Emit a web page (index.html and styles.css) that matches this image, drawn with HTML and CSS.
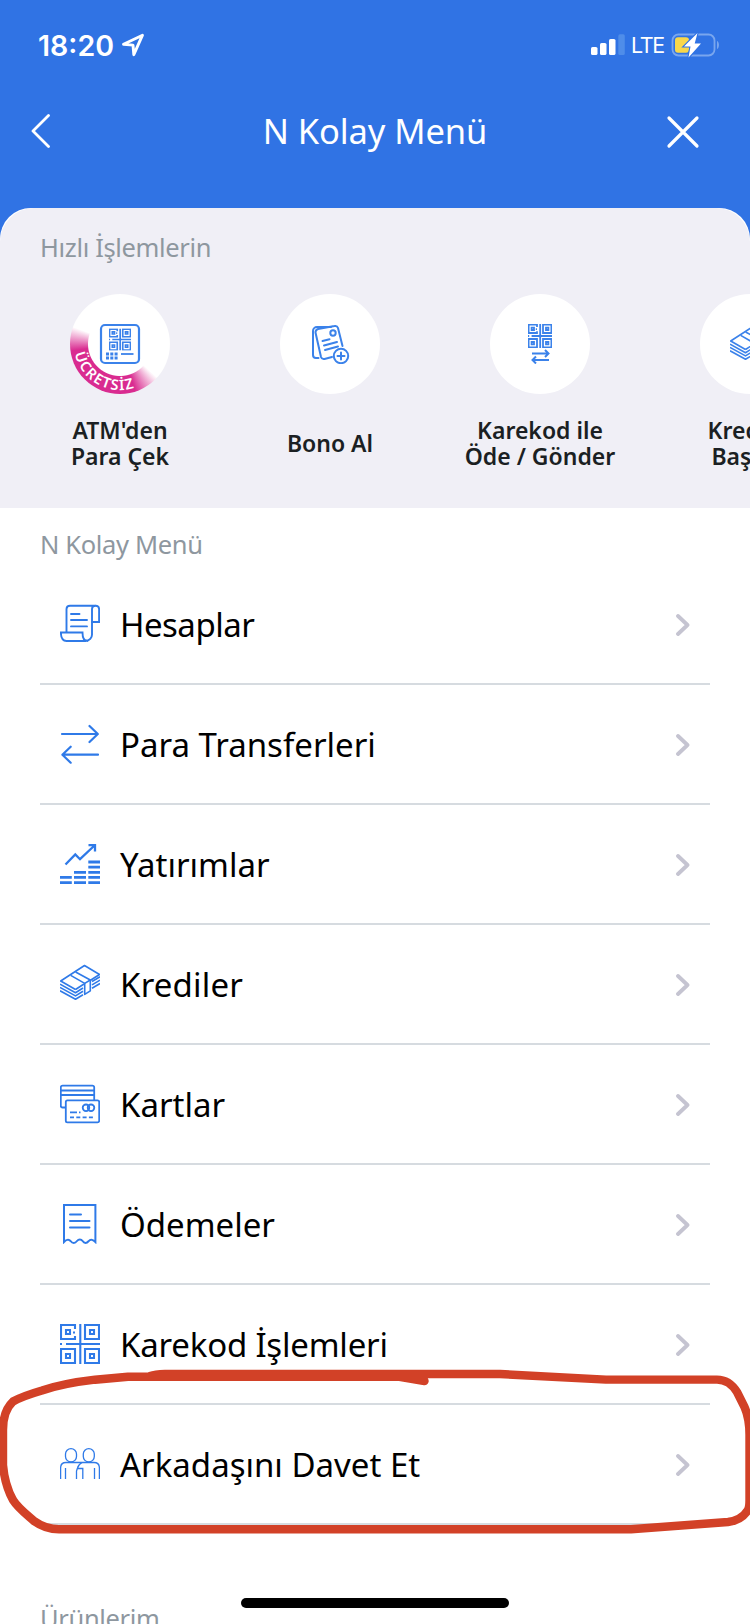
FILE: index.html
```html
<!DOCTYPE html>
<html lang="tr">
<head>
    <meta charset="UTF-8">
    <meta name="viewport" content="width=device-width, initial-scale=1.0">
    <title>N Kolay Menü</title>
    <link rel="stylesheet" href="styles.css">
</head>
<body>
    <!-- Shared icons -->
    <svg class="sprite" width="0" height="0">
        <symbol id="chevron" viewBox="0 0 14 22">
            <path d="M2 2l9.500 9-9.500 9" fill="none" stroke="#c5c4d1" stroke-width="3.800" stroke-linecap="round" stroke-linejoin="round"/>
        </symbol>
        <symbol id="qr" viewBox="0 0 40 40">
            <path d="M15 5V1H1v14h14v-3M25 1h14v14H25zM1 25h14v14H1zM25 25h14v14H25zM6 6h4v4H6zM30 6h4v4h-4zM6 30h4v4H6zM30 30h4v4h-4zM20.300 0v40M6 20h34M0 20h2M13 8.500h2" fill="none" stroke="currentColor"/>
        </symbol>
        <symbol id="money" viewBox="0 0 40 40">
            <g fill="none" stroke="currentColor" stroke-width="1.600" stroke-linejoin="round">
                <path d="M15.500 25.500L.700 17 24.500 1.500l15 9-9 5.700M15.500 25.500l8.500-5.500"/>
                <path d="M10.700 11.400l14 8v11l5.600-3.600V16L15.600 8"/>
                <path d="M24.700 19.400l5.600-3.400"/>
                <path d="M0 20.200l15.500 8.500 7.500-4.700M0 23.400l15.500 8.500 7.500-4.700M0 26.800l15.500 8.500 7.500-4.500"/>
                <path d="M32 17.500l8-4.800M32 20.900l8-4.800M32 24.300l8-4.800"/>
            </g>
        </symbol>
    </svg>

    <div class="phone">
        <header class="header">
            <div class="status-bar">
                <div class="status-left">
                    <span class="time">18:20</span>
                    <svg class="location" width="24" height="24" viewBox="0 0 24 24">
                        <path d="M21.500 2.200L2.500 11.300l9.500.800.800 9.600z" fill="none" stroke="#fff" stroke-width="2.900" stroke-linejoin="round"/>
                    </svg>
                </div>
                <div class="status-right">
                    <svg width="35" height="22" viewBox="0 0 35 22" fill="#fff">
                        <rect x="0" y="13" width="6.500" height="8" rx="1.600"/>
                        <rect x="9" y="9" width="6.500" height="12" rx="1.600"/>
                        <rect x="18" y="5" width="6.500" height="16" rx="1.600"/>
                        <rect x="27.300" y="0.300" width="6.500" height="20.700" rx="1.600" fill="#4f8de9"/>
                    </svg>
                    <span class="network">LTE</span>
                    <svg width="50" height="26" viewBox="0 0 50 26">
                        <rect x="1.500" y="2.500" width="42" height="21" rx="6" fill="none" stroke="#79a6ee" stroke-width="1.800"/>
                        <path d="M46 9c2.600.800 2.600 7.200 0 8z" fill="#79a6ee"/>
                        <rect x="4" y="5.200" width="14" height="15.600" rx="3" fill="#f8d74a"/>
                        <path d="M26.500 1L13 14.500h6.500L17.500 25.500 30 11.500h-6.300z" fill="#fff" stroke="#3073e4" stroke-width="2.200" paint-order="stroke"/>
                    </svg>
                </div>
            </div>
            <nav class="nav-bar">
                <svg width="36" height="36" viewBox="0 0 36 36">
                    <path d="M17.500 1.500L2 17 17.500 32.500" fill="none" stroke="#fff" stroke-width="2.800" stroke-linecap="round" stroke-linejoin="round"/>
                </svg>
                <h1>N Kolay Menü</h1>
                <svg width="36" height="36" viewBox="0 0 36 36">
                    <path d="M4 4l28 28M32 4l-28 28" stroke="#fff" stroke-width="3.200" stroke-linecap="round"/>
                </svg>
            </nav>
        </header>

        <main class="sheet">
            <section class="quick">
                <h2 class="quick-title">Hızlı İşlemlerin</h2>
                <div class="quick-list">
                    <a class="quick-item">
                        <span class="circle free">
                            <svg width="100" height="100" viewBox="0 0 100 100">
                                <defs>
                                    <path id="arc" d="M4.900 59.500A46 46 0 0 0 76 88"/>
                                </defs>
                                <text class="free-text"><textPath href="#arc" textLength="77">ÜCRETSİZ</textPath></text>
                                <rect x="31" y="31" width="38" height="38" rx="4" fill="none" stroke="#3b82ea" stroke-width="2.200"/>
                                <use href="#qr" x="39" y="34.500" width="22" height="22" stroke-width="3"/>
                                <path d="M36 60h12M36 64h12" stroke="#3b82ea" stroke-width="3" stroke-dasharray="3 1.300"/>
                                <path d="M51 60h12.500" stroke="#3b82ea" stroke-width="1.800"/>
                            </svg>
                        </span>
                        <span class="quick-label">ATM'den<br>Para Çek</span>
                    </a>
                    <a class="quick-item">
                        <span class="circle">
                            <svg width="40" height="40" viewBox="0 0 40 40" fill="none" stroke="#3b82ea" stroke-width="2" stroke-linecap="round">
                                <path d="M8.500 34H6a3 3 0 0 1-3-3V7a4 4 0 0 1 4-4h14"/>
                                <path d="M22 33l-7.500 2a3 3 0 0 1-3.500-2L5.500 8.500A3.500 3.500 0 0 1 8 5l16.500-3a3 3 0 0 1 3.500 2l4.500 18"/>
                                <circle cx="23" cy="9" r="2.700"/>
                                <path d="M12.500 17l7-1.700M14 21.500l13-3.500M15 26l13-3.500"/>
                                <circle cx="31" cy="32" r="7.200"/>
                                <path d="M31 28.500v7M27.500 32h7" stroke-width="2"/>
                            </svg>
                        </span>
                        <span class="quick-label">Bono Al</span>
                    </a>
                    <a class="quick-item">
                        <span class="circle">
                            <svg width="40" height="40" viewBox="0 0 40 40">
                                <use href="#qr" x="8" width="24" height="24" stroke-width="3"/>
                                <path d="M12 29.500h16M25 26l3.500 3.500L25 33M29 36H12.500M16 32.500L12.500 36l3.500 3.500" fill="none" stroke="#3b82ea" stroke-width="2"/>
                            </svg>
                        </span>
                        <span class="quick-label">Karekod ile<br>Öde / Gönder</span>
                    </a>
                    <a class="quick-item">
                        <span class="circle">
                            <svg width="40" height="40"><use href="#money"/></svg>
                        </span>
                        <span class="quick-label">Krediye<br>Başvur</span>
                    </a>
                </div>
            </section>

            <section class="menu">
                <h2 class="menu-title">N Kolay Menü</h2>
                <ul class="menu-list">
                    <li>
                        <svg class="icon" viewBox="0 0 40 40" fill="none" stroke="currentColor" stroke-width="1.900" stroke-linecap="round">
                            <path d="M6.500 28V5A3.500 3.500 0 0 1 10 1.700h25.500A3.500 3.500 0 0 0 32 5v25a6.500 6.500 0 0 1-6.500 7H6.500C3 37 .9 34 .9 28.500h21.600c0 5 1 8.500 5 8.500"/>
                            <path d="M35.500 1.700A3.500 3.500 0 0 1 39.100 5v13H32"/>
                            <path d="M11 10h8.500M11 16h16M11 22.400h16"/>
                        </svg>
                        <span class="tight">Hesaplar</span>
                        <svg class="chevron"><use href="#chevron"/></svg>
                    </li>
                    <li>
                        <svg class="icon" viewBox="0 0 40 40" fill="none" stroke="currentColor" stroke-width="2.200" stroke-linecap="round" stroke-linejoin="round">
                            <path d="M2 10h35.500M29.500 2l8.300 8-8.300 8M38 30.700H2.500M10.700 22.700l-8.300 8 8.300 8"/>
                        </svg>
                        <span>Para Transferleri</span>
                        <svg class="chevron"><use href="#chevron"/></svg>
                    </li>
                    <li>
                        <svg class="icon" viewBox="0 0 40 40" fill="none" stroke="currentColor">
                            <path d="M0 38.600h11.800M0 33.400h11.800M14 38.600h12M14 33.400h12M14 28.300h12M28.300 38.600H40M28.300 33.400H40M28.300 28.300H40M28.300 23.100H40M28.300 18H40" stroke-width="2.800"/>
                            <path d="M5.500 20.500l9.800-10 4.700 4.700L34.500 1.500M28.500 1h6.500v6.500" stroke-width="2.300"/>
                        </svg>
                        <span>Yatırımlar</span>
                        <svg class="chevron"><use href="#chevron"/></svg>
                    </li>
                    <li>
                        <svg class="icon"><use href="#money"/></svg>
                        <span class="wide">Krediler</span>
                        <svg class="chevron"><use href="#chevron"/></svg>
                    </li>
                    <li>
                        <svg class="icon" viewBox="0 0 40 40" fill="none" stroke="currentColor" stroke-width="1.800">
                            <path d="M5.500 23.500H2.500a1.700 1.700 0 0 1-1.700-1.700V3.300a1.700 1.700 0 0 1 1.700-1.700h30a1.700 1.700 0 0 1 1.700 1.700v13M1 6.500h33M1 11h33"/>
                            <rect x="5.800" y="16.300" width="33.400" height="22" rx="1.600"/>
                            <circle cx="26" cy="23.800" r="3.300"/>
                            <circle cx="31" cy="23.800" r="3.300"/>
                            <path d="M10 28.400h7M19 28.400h1.500"/>
                            <path d="M10 33.400h23" stroke-dasharray="4 2.300"/>
                        </svg>
                        <span>Kartlar</span>
                        <svg class="chevron"><use href="#chevron"/></svg>
                    </li>
                    <li>
                        <svg class="icon" viewBox="0 0 40 40" fill="none" stroke="currentColor" stroke-width="2">
                            <path d="M4 38V1h31.400v37c-2-2-4.800-3.300-6.600-1-2.300 2.500-4.500 2.500-6.200 0-1.500-2-4-2-5.600 0-2 2.500-4.500 2.500-6.500 0C8.500 34.700 6 36 4 38z"/>
                            <path d="M10 10.500h11M10 17h19.500M10 23.500h19.500" stroke-linecap="round"/>
                        </svg>
                        <span>Ödemeler</span>
                        <svg class="chevron"><use href="#chevron"/></svg>
                    </li>
                    <li>
                        <svg class="icon"><use href="#qr" stroke-width="2.100"/></svg>
                        <span class="snug">Karekod İşlemleri</span>
                        <svg class="chevron"><use href="#chevron"/></svg>
                    </li>
                    <li>
                        <svg class="icon" viewBox="0 0 40 40" fill="none" stroke="currentColor" stroke-width="1.300">
                            <rect x="5.500" y="4.600" width="11" height="13.400" rx="5.500"/>
                            <rect x="23.300" y="4.600" width="11" height="13.400" rx="5.500"/>
                            <path d="M.600 35V24c0-3.500 2-5.500 5.400-5.500h28c3.500 0 5.400 2 5.400 5.500v11M5.500 35V24M34.500 35V24"/>
                            <path d="M22 18.500c-2.500 1.500-4 3-4.500 5.500L16.500 27v8M17.500 24.500h5.300V35"/>
                        </svg>
                        <span>Arkadaşını Davet Et</span>
                        <svg class="chevron"><use href="#chevron"/></svg>
                    </li>
                </ul>
            </section>

            <section class="products">
                <h2 class="menu-title">Ürünlerim</h2>
            </section>
        </main>

        <!-- Hand drawn marker around the last item -->
        <svg class="marker" width="750" height="180" viewBox="0 1360 750 180">
            <path d="M424.500 1381L398 1376.700H145L128 1376.700 95 1379.700C75 1382 60 1384.500 42 1390.500 30 1394 20 1397.500 13 1401.500 6 1408 3 1418 3 1430V1465C4 1477 7 1489 13 1500 18 1508 26 1514 34 1521 41 1526 49 1529.300 59 1529.300H631L728 1522C736 1521 743 1518 748 1510 749 1508 749.500 1504 749.500 1500V1435C749.500 1424 748 1415 744.500 1407L737 1392C732 1384 726 1379.600 717 1379.600H606L500 1374H165Q155 1374.500 150 1376"/>
        </svg>

        <div class="home-indicator"></div>
    </div>
</body>
</html>
```

FILE: styles.css
```css
* {
    margin: 0;
    padding: 0;
    box-sizing: border-box;
}

body {
    font-family: "Noto Sans", "Open Sans", sans-serif;
    background: #fff;
    overflow: hidden;
}

svg {
    display: block;
    flex-shrink: 0;
}

.sprite {
    position: absolute;
}

.phone {
    position: relative;
    width: 750px;
    height: 1624px;
    overflow: hidden;
    background: #3073e4;
}

/* Header */
.header {
    height: 208px;
    color: #fff;
}

.status-bar {
    display: flex;
    justify-content: space-between;
    align-items: center;
    height: 90px;
    padding: 0 29px 0 38px;
}

.status-left,
.status-right {
    display: flex;
    align-items: center;
}

.status-left {
    gap: 7px;
}

.time {
    font-family: Inter, sans-serif;
    font-size: 28.5px;
    font-weight: 600;
}

.network {
    font-family: Inter, sans-serif;
    font-size: 21.5px;
    margin: 0 7px 0 5px;
    letter-spacing: -1.3px;
}

.nav-bar {
    display: flex;
    justify-content: space-between;
    align-items: center;
    height: 84px;
    padding: 0 49px 0 31px;
}

.nav-bar h1 {
    font-size: 34.5px;
    font-weight: 400;
    margin: -4px 0 0 18px;
    letter-spacing: -0.1px;
}

/* Sheet */
.sheet {
    background: #fff;
    height: 1416px;
    border-radius: 31px 31px 0 0;
}

.quick {
    height: 300px;
    background: #f0eff6;
    border-radius: 34px 34px 0 0;
    overflow: hidden;
}

.quick-title,
.menu-title {
    padding-left: 40px;
    font-size: 25.5px;
    font-weight: 400;
    line-height: 36px;
    letter-spacing: -0.35px;
    color: #8e979f;
}

.quick-title {
    padding-top: 21px;
}

.quick-list {
    display: flex;
    width: 860px;
    margin-top: 29px;
    padding-left: 15px;
}

.quick-item {
    display: flex;
    flex-direction: column;
    align-items: center;
    width: 210px;
}

.circle {
    display: flex;
    justify-content: center;
    align-items: center;
    width: 100px;
    height: 100px;
    border-radius: 50%;
    background: #fff;
    color: #3b82ea;
}

.free {
    background: radial-gradient(circle, #fff 31.5px, transparent 32.5px),
        conic-gradient(#fff 132deg, #d92b90 162deg, #d92b90 262deg, #fff 290deg);
}

.free-text {
    font-size: 14.5px;
    font-weight: 600;
    fill: #fff;
}

.quick-label {
    display: flex;
    align-items: center;
    height: 52px;
    margin-top: 23px;
    font-size: 23px;
    font-weight: 600;
    line-height: 26px;
    text-align: center;
    color: #1b1f23;
}

/* Menu */
.menu {
    height: 1074px;
    padding-top: 18px;
}

.menu-list {
    margin: 3px 40px 0;
    list-style: none;
}

.menu-list li {
    display: flex;
    align-items: center;
    height: 120px;
    padding: 0 20px;
    border-bottom: 2px solid #d6dbe0;
    font-size: 33px;
    color: #000;
}

.menu-list span {
    flex: 1;
    padding-left: 20px;
}

.menu-list .tight {
    letter-spacing: -0.5px;
}

.menu-list .snug {
    letter-spacing: -0.2px;
}

.menu-list .wide {
    letter-spacing: 0.2px;
}

.icon {
    width: 40px;
    height: 40px;
    color: #2f7ae8;
}

.chevron {
    width: 14px;
    height: 22px;
    margin-top: 2px;
}

.products {
    padding-top: 18px;
}

/* Overlays */
.marker {
    position: absolute;
    top: 1360px;
    left: 0;
    fill: none;
    stroke: #d24127;
    stroke-width: 8.4px;
    stroke-linecap: round;
    stroke-linejoin: round;
}

.home-indicator {
    position: absolute;
    left: 241px;
    bottom: 16px;
    width: 268px;
    height: 10px;
    border-radius: 5px;
    background: #000;
}
```
